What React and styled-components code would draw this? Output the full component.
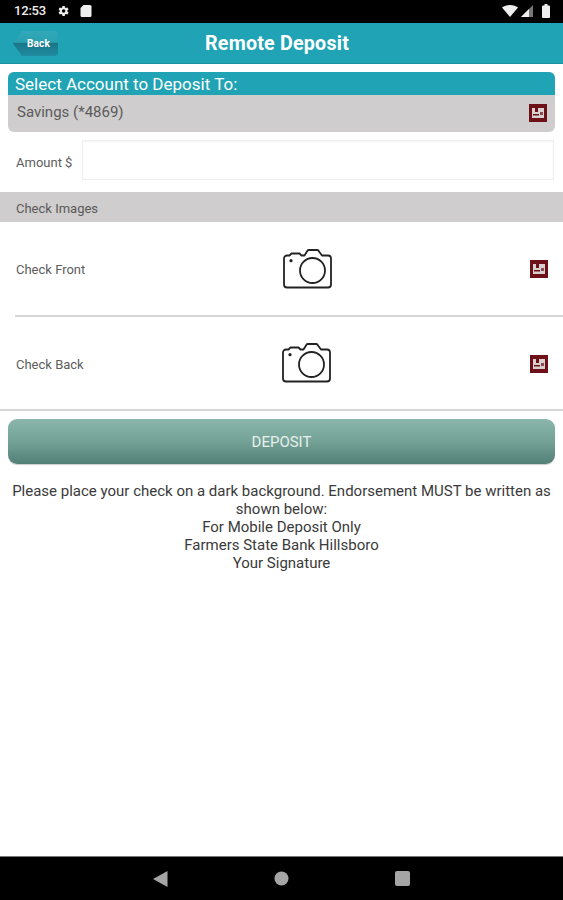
import React from 'react'
import styled, { createGlobalStyle } from 'styled-components'

const Global = createGlobalStyle`
  html, body { margin: 0; padding: 0; background: #fff; }
  * { box-sizing: border-box; }
`

const Screen = styled.div`
  display: flex;
  flex-direction: column;
  width: 563px;
  height: 900px;
  overflow: hidden;
  font-family: Roboto, "Liberation Sans", sans-serif;
  color: #555;
`

const StatusBar = styled.div`
  display: flex;
  align-items: center;
  height: 23px;
  padding: 0 13px 2px 14px;
  background: #000;
  color: #eee;
  font-size: 13px;
  font-weight: 500;
`

const Clock = styled.span`
  margin-right: 10px;
  letter-spacing: -0.2px;
`

const StatusRight = styled.div`
  display: flex;
  align-items: center;
  gap: 3px;
  margin-left: auto;
`

const Header = styled.div`
  display: flex;
  align-items: center;
  justify-content: center;
  position: relative;
  height: 41px;
  padding: 1px 9px 0 0;
  background: #20a3b5;
  border-bottom: 1px solid #1a93a4;
  color: #fff;
  font-size: 19.7px;
  font-weight: 700;
  letter-spacing: 0.2px;
`

const BackButton = styled.div`
  position: absolute;
  left: 13px;
  top: 8px;
  display: flex;
  align-items: center;
  justify-content: center;
  width: 45px;
  height: 25px;
  padding-left: 6px;
  clip-path: path("M9 0H41a4 4 0 0 1 4 4V21a4 4 0 0 1-4 4H9L0 12.500z");
  background: linear-gradient(#32a9ba 0, #2aa0b0 45%, #1a7689 50%, #208ba0 100%);
  color: #fff;
  font-size: 10px;
  font-weight: 700;
`

const Content = styled.div`
  flex: 1;
  padding-top: 8px;
`

const AccountCard = styled.div`
  margin: 0 8px;
  border-radius: 6px;
  overflow: hidden;
  background: #cfcdcd;
`

const CardTitle = styled.div`
  display: flex;
  align-items: center;
  height: 23px;
  padding: 1px 0 0 7px;
  background: #20a3b5;
  color: #fff;
  font-size: 17px;
`

const AccountRow = styled.div`
  display: flex;
  align-items: center;
  justify-content: space-between;
  height: 37px;
  padding: 0 8px 1px 9px;
  font-size: 15px;
  color: #5b5b5b;
`

const AccountName = styled.span`
  margin-bottom: 2px;
`

const AmountRow = styled.div`
  display: flex;
  align-items: center;
  height: 40px;
  margin-top: 8px;
  padding: 0 9px 0 16px;
`

const FieldLabel = styled.span`
  width: 66px;
  margin-top: 4px;
  font-size: 13px;
  color: #5d5d5d;
`

const AmountInput = styled.div`
  flex: 1;
  height: 40px;
  background: #fff;
  border: 1px solid #efefef;
  box-shadow: inset 0 1px 2px rgba(0, 0, 0, 0.05);
`

const SectionBar = styled.div`
  display: flex;
  align-items: center;
  height: 30px;
  margin-top: 12px;
  padding: 2px 0 0 16px;
  background: #cfcdcd;
  font-size: 13px;
  color: #5a5a5a;
`

const CheckRow = styled.div`
  display: grid;
  grid-template-columns: ${p => p.$labelWidth}px auto 1fr;
  align-items: center;
  height: ${p => p.$height}px;
  margin-left: ${p => (p.$inset ? 15 : 0)}px;
  padding: 0 15px 0 ${p => (p.$inset ? 1 : 16)}px;
  border-bottom: 2px solid #d6d6d6;
  font-size: 13px;
  color: #5d5d5d;
`

const CheckLabel = styled.span`
  margin-top: 2px;
`

const RowEnd = styled.div`
  display: flex;
  justify-content: flex-end;
  margin-top: 1px;
`

const DepositButton = styled.div`
  display: flex;
  align-items: center;
  justify-content: center;
  height: 45px;
  margin: 8px 8px 0;
  border-radius: 9px;
  background: linear-gradient(#8ab6ab, #74a297 50%, #527f76);
  box-shadow: 0 1px 1px rgba(0, 0, 0, 0.2);
  color: #e6f0ec;
  font-size: 15px;
`

const Notice = styled.div`
  margin-top: 18px;
  padding: 0 8px;
  text-align: center;
  font-size: 15px;
  line-height: 18px;
  color: #3a3a3a;
`

const NavBar = styled.div`
  display: flex;
  align-items: center;
  justify-content: space-between;
  height: 44px;
  padding: 0 153px 0 153px;
  background: #000;
  border-top: 1px solid #777;
`

const PickerBox = styled.span`
  display: inline-flex;
  width: 18px;
  height: 18px;
`

const Picker = () => (
  <PickerBox>
    <svg width="18" height="18" viewBox="0 0 18 18">
      <rect width="18" height="18" fill="#6e1018" />
      <rect x="3" y="4" width="12" height="10" fill="#d8cfcf" />
      <rect x="6" y="4" width="3" height="4" fill="#6e1018" />
      <rect x="4" y="10" width="6" height="1.5" fill="#6e1018" />
      <rect x="11" y="8" width="3" height="3" fill="#8a4a50" />
    </svg>
  </PickerBox>
)

const Camera = () => (
  <svg width="50" height="40" viewBox="0 0 50 40" fill="none" stroke="#222" strokeWidth="1.8" strokeLinejoin="round">
    <path d="M4 38.500h41a3 3 0 0 0 3-3V9.500a3 3 0 0 0-3-3h-6l-3-4a2 2 0 0 0-2-1.500H26a2 2 0 0 0-2 1.500l-2.500 4h-3l-2-2h-8l-2 2H4a3 3 0 0 0-3 3v26a3 3 0 0 0 3 3z" />
    <circle cx="29.500" cy="21.500" r="12.500" />
    <circle cx="8" cy="11.700" r="1.600" fill="#222" stroke="none" />
  </svg>
)

const Glyph = styled.svg`
  display: block;
`

export default function App() {
  return (
    <Screen>
      <Global />
      <StatusBar>
        <Clock>12:53</Clock>
        <Glyph width="14" height="14" viewBox="0 0 24 24" fill="#eee">
          <path d="M19.400 13a7.600 7.600 0 0 0 0-2l2.100-1.600-2-3.500-2.500 1a7.600 7.600 0 0 0-1.700-1L15 3.300h-4l-.4 2.600a7.600 7.600 0 0 0-1.700 1l-2.500-1-2 3.500L6.500 11a7.600 7.600 0 0 0 0 2l-2.100 1.600 2 3.500 2.500-1a7.600 7.600 0 0 0 1.700 1l.4 2.600h4l.4-2.600a7.600 7.600 0 0 0 1.700-1l2.500 1 2-3.500zM13 15a3 3 0 1 1 0-6 3 3 0 0 1 0 6z" />
        </Glyph>
        <Glyph width="12" height="13" viewBox="0 0 12 13" fill="#eee" style={{ marginLeft: 10 }}>
          <path d="M3.500 1H10a1.500 1.500 0 0 1 1.500 1.500v9A1.500 1.500 0 0 1 10 13H2a1.500 1.500 0 0 1-1.500-1.500V4z" />
        </Glyph>
        <StatusRight>
          <Glyph width="16" height="12" viewBox="0 0 16 12" fill="#eee">
            <path d="M0 2.500C2 .9 5 0 8 0s6 .9 8 2.500L8 12z" />
          </Glyph>
          <Glyph width="12" height="12" viewBox="0 0 12 12">
            <path d="M0 12 12 0v12z" fill="#777" />
            <path d="M0 12 8 4v8z" fill="#eee" />
          </Glyph>
          <Glyph width="8" height="14" viewBox="0 0 8 14" fill="#eee" style={{ marginLeft: 6 }}>
            <path d="M2.500 0h3v1.500H7a1 1 0 0 1 1 1V13a1 1 0 0 1-1 1H1a1 1 0 0 1-1-1V2.500a1 1 0 0 1 1-1h1.500z" />
          </Glyph>
        </StatusRight>
      </StatusBar>
      <Header>
        <BackButton>Back</BackButton>
        Remote Deposit
      </Header>
      <Content>
        <AccountCard>
          <CardTitle>Select Account to Deposit To:</CardTitle>
          <AccountRow>
            <AccountName>Savings (*4869)</AccountName>
            <Picker />
          </AccountRow>
        </AccountCard>
        <AmountRow>
          <FieldLabel>Amount $</FieldLabel>
          <AmountInput />
        </AmountRow>
        <SectionBar>Check Images</SectionBar>
        <CheckRow $height={95} $labelWidth={267} $inset>
          <CheckLabel>Check Front</CheckLabel>
          <Camera />
          <RowEnd><Picker /></RowEnd>
        </CheckRow>
        <CheckRow $height={94} $labelWidth={266}>
          <CheckLabel>Check Back</CheckLabel>
          <Camera />
          <RowEnd><Picker /></RowEnd>
        </CheckRow>
        <DepositButton>DEPOSIT</DepositButton>
        <Notice>
          Please place your check on a dark background. Endorsement MUST be written as shown below:
          <br />For Mobile Deposit Only
          <br />Farmers State Bank Hillsboro
          <br />Your Signature
        </Notice>
      </Content>
      <NavBar>
        <Glyph width="15" height="16" viewBox="0 0 15 16" fill="#a5a5a5">
          <path d="M14.500 0v16L0 8z" />
        </Glyph>
        <Glyph width="15" height="15" viewBox="0 0 15 15" fill="#a5a5a5">
          <circle cx="7.500" cy="7.500" r="7" />
        </Glyph>
        <Glyph width="15" height="15" viewBox="0 0 15 15" fill="#a5a5a5">
          <rect width="15" height="15" rx="2" />
        </Glyph>
      </NavBar>
    </Screen>
  )
}
